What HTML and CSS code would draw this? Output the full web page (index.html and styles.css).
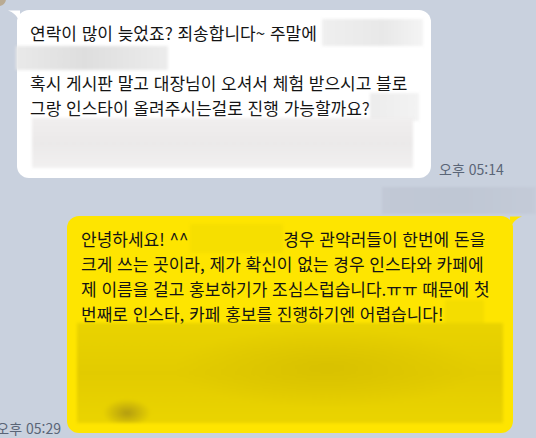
FILE: index.html
```html
<!DOCTYPE html>
<html lang="ko">

<head>
    <meta charset="UTF-8" />
    <meta name="viewport" content="width=device-width, initial-scale=1.0" />
    <title>채팅</title>
    <link rel="stylesheet" href="styles.css">
</head>

<body>
    <div class="avatar-edge"></div>

    <div class="chat">
        <!-- received message -->
        <div class="row row-in">
            <div class="bubble bubble-in">
                <svg class="tail tail-in" width="12" height="14" viewBox="0 0 12 14">
                    <path d="M0 0.5 L12 0.5 L12 12 C9 6 5 2 0 0.5 Z" fill="#ffffff" />
                </svg>
                <div class="line">연락이 많이 늦었죠? 죄송합니다~ 주말에&nbsp;<span class="mask mask-w1"></span></div>
                <div class="line"><span class="mask mask-w2"></span></div>
                <div class="line">혹시 게시판 말고 대장님이 오셔서 체험 받으시고 블로</div>
                <div class="line">그랑 인스타이 올려주시는걸로 진행 가능할까요?<span class="mask mask-w3"></span></div>
                <div class="mask mask-block"></div>
            </div>
            <span class="time">오후 05:14</span>
        </div>

        <div class="row row-strip">
            <div class="strip"></div>
        </div>

        <!-- sent message -->
        <div class="row row-out">
            <span class="time time-out">오후 05:29</span>
            <div class="bubble bubble-out">
                <svg class="tail tail-out" width="12" height="14" viewBox="0 0 12 14">
                    <path d="M12 0.5 L0 0.5 L0 12 C3 6 7 2 12 0.5 Z" fill="#fee500" />
                </svg>
                <div class="line">안녕하세요! ^^<span class="mask mask-y1"></span>경우 관악러들이 한번에 돈을</div>
                <div class="line">크게 쓰는 곳이라, 제가 확신이 없는 경우 인스타와 카페에</div>
                <div class="line">제 이름을 걸고 홍보하기가 조심스럽습니다.ㅠㅠ 때문에 첫</div>
                <div class="line">번째로 인스타, 카페 홍보를 진행하기엔 어렵습니다!<span class="mask mask-y2"></span></div>
                <div class="mask mask-yblock"></div>
            </div>
        </div>
    </div>
</body>

</html>
```

FILE: styles.css
```css
* {
    margin: 0;
    padding: 0;
    box-sizing: border-box;
}

body {
    font-family: 'Noto Sans CJK KR', 'Noto Sans', sans-serif;
    background: #c9d1de;
    color: #141414;
    overflow: hidden;
    position: relative;
    width: 536px;
    height: 438px;
}

.avatar-edge {
    position: absolute;
    top: -8px;
    left: -8px;
    width: 14px;
    height: 14px;
    border-radius: 50%;
    background: #b9aa92;
}

.chat {
    display: flex;
    flex-direction: column;
    padding-top: 10px;
}

.row {
    display: flex;
    align-items: flex-end;
}

.row-in {
    padding-left: 17px;
    gap: 8px;
}

.row-strip {
    justify-content: flex-end;
    margin-top: 9px;
}

.strip {
    width: 154px;
    height: 27px;
    background: linear-gradient(90deg, #c2c9d6, #bfc7d4 50%, #c4cbd8);
    filter: blur(1px);
}

.row-out {
    justify-content: flex-end;
    padding-right: 23px;
    gap: 6px;
    margin-top: 2px;
}

/* Bubbles */
.bubble {
    position: relative;
    border-radius: 12px;
    font-size: 17px;
    padding: 10px 13px;
}

.bubble-in {
    width: 414px;
    background: #ffffff;
}

.bubble-out {
    width: 446px;
    background: #fee500;
    padding: 10px 14px;
}

.tail {
    position: absolute;
    top: 0;
}

.tail-in {
    left: -9px;
}

.tail-out {
    right: -9px;
}

.line {
    display: flex;
    align-items: center;
    height: 25px;
    white-space: nowrap;
}

.time {
    font-size: 14px;
    line-height: 16px;
    color: #5a6577;
    margin-bottom: 1px;
    white-space: nowrap;
}

.time-out {
    margin-bottom: -3px;
}

/* Redacted areas */
.mask {
    display: inline-block;
    flex-shrink: 0;
    filter: blur(1.5px);
}

.mask-w1 {
    width: 101px;
    height: 27px;
    background: linear-gradient(90deg, #efefef, #e8e8e8 60%, #f4f4f4);
}

.mask-w2 {
    width: 152px;
    height: 24px;
    margin-left: -14px;
    background: linear-gradient(90deg, #e9e9e9, #dedede 45%, #ececec);
}

.mask-w3 {
    width: 49px;
    height: 28px;
    margin-top: -2px;
    background: linear-gradient(90deg, #ececec, #f3f3f3);
}

.mask-block {
    display: block;
    width: 381px;
    height: 50px;
    margin-left: 2px;
    margin-top: -2px;
    background: linear-gradient(180deg, #f0eeee, #ebe9e9 50%, #f1f0f0);
}

.mask-y1 {
    width: 93px;
    height: 29px;
    margin-left: 2px;
    background: #f6df00;
}

.mask-y2 {
    width: 39px;
    height: 27px;
    margin-left: 2px;
    background: #f4dd00;
}

.mask-yblock {
    display: block;
    width: 426px;
    height: 100px;
    margin-left: -4px;
    margin-top: -3px;
    background:
        radial-gradient(ellipse 24px 14px at 50px 90px, #b29c10, rgba(200, 180, 0, 0) 100%),
        radial-gradient(ellipse 150px 40px at 250px 45px, #d8c100, rgba(220, 200, 0, 0) 100%),
        linear-gradient(180deg, #e9d300, #e2cb00 50%, #ead400);
}
```
